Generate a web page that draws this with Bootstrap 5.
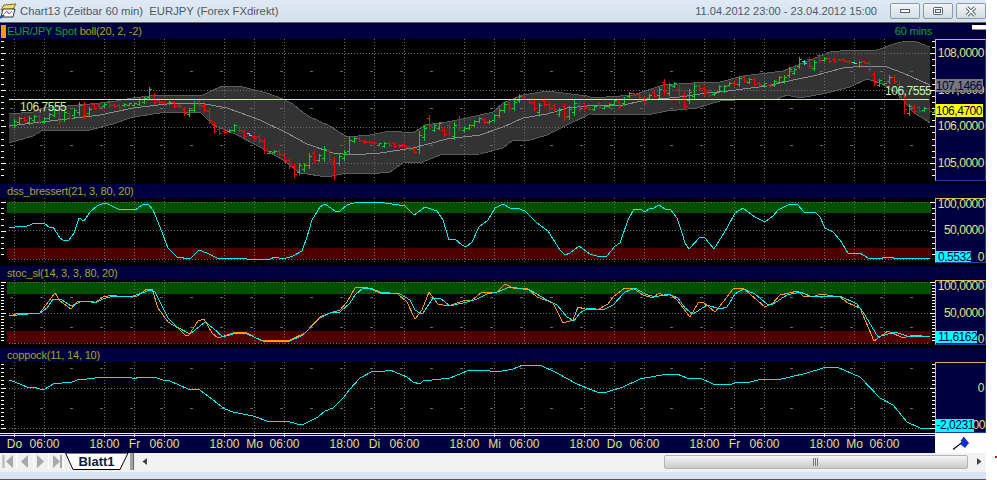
<!DOCTYPE html>
<html lang="de">
<head>
<meta charset="UTF-8">
<title>Chart13</title>
<link href="https://cdn.jsdelivr.net/npm/bootstrap@5.3.3/dist/css/bootstrap.min.css" rel="stylesheet">
<style>
  body { margin: 0; background: #fff; font-family: "Liberation Sans", Arial, sans-serif; overflow: hidden; }
  svg { display: block; }
  svg text { font-family: "Liberation Sans", Arial, sans-serif; }

  .chart-window { width: 986px; height: 480px; background: #000; }

  .title-bar { height: 23px; background: linear-gradient(#dfe9f3, #d3e1ee); border-bottom: 1px solid #666; color: #4d5966; font-size: 11.3px; }
  .title-text { margin-left: 3px; white-space: pre; }
  .title-range { margin-right: 10px; font-size: 11.1px; }
  .win-btn { width: 30px; height: 16px; margin-left: 3px; padding: 0; border: 1px solid #8b99a8; border-radius: 2px; background: linear-gradient(#f0f4f8, #d4dde6); }

  .gap-line { height: 1px; }
  .pane-head { background: #000040; height: 14px; padding-left: 7px; font-size: 11px; letter-spacing: -.18px; line-height: 14px; color: #a8a818; white-space: pre; }
  .pane-head.first { height: 15px; padding-left: 1px; line-height: 15px; }
  .sym-mark { width: 5px; height: 13px; background: #ff9900; margin-right: 1px; }
  .sym-name { color: #00a828; }
  .period { color: #00a828; margin-left: auto; margin-right: 40px; }
  .mini-btn { width: 14px; height: 5px; background: #fff; border-bottom: 1px solid #888; margin-bottom: 8px; }

  .axis-box { width: 51px; border-style: solid; border-width: 1px; border-color: #e3b84a #1740a8 #1740a8 #e3b84a; background: #000040; }
  .axis-box svg { overflow: visible; }
  .axis-p1 { height: 142px; }
  .axis-p2 { height: 65px; }
  .axis-p3 { height: 65px; }
  .axis-p4 { height: 71px; }
  .axis-box text { font-size: 12px; letter-spacing: -.47px; fill: #e0e47c; }
  .axis-box .on-box { fill: #000040; }
  .plot-value { font-size: 12px; letter-spacing: -.47px; fill: #c4f5a8; }

  .plot { width: 935px; flex: none; }
  .time-axis { height: 20px; background: #000040; }
  .flag-cell { width: 51px; background: #fff; }
  .time-axis text { font-size: 12px; fill: #e0e47c; text-anchor: middle; }

  .sheet-bar { height: 19px; background: #f0f0f0; }
  .sheet-grip { width: 4px; height: 17px; background: #a0a0a0; border-right: 1px solid #666; margin-left: 1px; }
  .sheet-scroll { background: #f2f2f2; height: 17px; margin-left: 3px; }
  .scroll-thumb { width: 304px; height: 14px; margin-left: auto; border: 1px solid #b4b4b4; border-radius: 2px; background: linear-gradient(#f6f6f6, #cacaca); }
  .status-strip { height: 7px; background: #dae5f1; border-bottom: 1px solid #555; box-sizing: content-box; }
  .stray-dot { width: 2px; height: 2px; background: #e00; left: 995px; top: 456px; }
</style>
</head>
<body>
<div class="chart-window d-flex flex-column">

  <div class="title-bar d-flex align-items-center">
    <svg width="17" height="16" viewBox="0 0 17 16">
      <path d="M4 2 L16 1 L13 6 L1 7 Z" fill="#f6de6a" stroke="#7a6a20"/>
      <path d="M3 6 H15 L13 14 H1 Z" fill="#fff" stroke="#333"/>
      <path d="M4 11 L7 8 L9 11 L12 8" fill="none" stroke="#d0405a"/>
      <path d="M0 15 L4 12" stroke="#1c4f9c" stroke-width="2"/>
    </svg>
    <span class="title-text">Chart13 (Zeitbar 60 min)  EURJPY (Forex FXdirekt)</span>
    <span class="title-range ms-auto">11.04.2012 23:00 - 23.04.2012 15:00</span>
    <button class="win-btn d-flex align-items-center justify-content-center" aria-label="Minimieren">
      <svg width="12" height="6" viewBox="0 0 12 6"><rect x="1.5" y="1.5" width="9" height="3" fill="#fff" stroke="#55606c"/></svg>
    </button>
    <button class="win-btn d-flex align-items-center justify-content-center" aria-label="Wiederherstellen">
      <svg width="12" height="10" viewBox="0 0 12 10"><rect x="1.5" y="1.5" width="9" height="7" rx="1" fill="#fff" stroke="#55606c"/><rect x="3.5" y="3.5" width="5" height="3" fill="#e8edf2" stroke="#55606c"/></svg>
    </button>
    <button class="win-btn d-flex align-items-center justify-content-center" aria-label="Schließen">
      <svg width="14" height="11" viewBox="0 0 14 11"><path d="M3 1.5 L11 9.5 M11 1.5 L3 9.5" stroke="#55606c" stroke-width="3.4"/><path d="M3 1.5 L11 9.5 M11 1.5 L3 9.5" stroke="#fff" stroke-width="1.6"/></svg>
    </button>
  </div>
  <div class="gap-line"></div>

  <!-- price pane -->
  <div class="pane-head first d-flex align-items-center">
    <span class="sym-mark"></span><span class="sym-name">EUR/JPY Spot</span><span> boll(20, 2, -2)</span>
    <span class="period">60 mins</span><span class="mini-btn"></span>
  </div>
  <div class="d-flex">
    <svg class="plot" id="plotPrice" width="935" height="145" viewBox="0 39 935 145"></svg>
    <div class="axis-box axis-p1">
      <svg width="49" height="140" viewBox="936 40 49 140">
        <g text-anchor="end">
          <text x="984" y="57">108,0000</text>
          <text x="984" y="94">107,0000</text>
          <text x="984" y="130">106,0000</text>
          <text x="984" y="167">105,0000</text>
        </g>
        <rect x="936" y="79" width="47" height="13" fill="#777"/>
        <text class="on-box" x="982" y="90" text-anchor="end">107,1466</text>
        <rect x="936" y="104" width="47" height="13" fill="#ff0"/>
        <text class="on-box" x="982" y="115" text-anchor="end">106,4700</text>
      </svg>
    </div>
  </div>

  <!-- dss -->
  <div class="pane-head">dss_bressert(21, 3, 80, 20)</div>
  <div class="d-flex">
    <svg class="plot" id="plotDss" width="935" height="68" viewBox="0 198 935 68"></svg>
    <div class="axis-box axis-p2">
      <svg width="49" height="63" viewBox="936 199 49 63">
        <g text-anchor="end">
          <text x="984" y="208">100,0000</text>
          <text x="984" y="234">50,0000</text>
          <text x="984" y="261">0</text>
        </g>
        <rect x="936" y="251" width="35" height="11" fill="#0ff"/>
        <text class="on-box" x="938" y="261">0,5532</text>
      </svg>
    </div>
  </div>

  <!-- stochastic -->
  <div class="pane-head">stoc_sl(14, 3, 3, 80, 20)</div>
  <div class="d-flex">
    <svg class="plot" id="plotStoc" width="935" height="68" viewBox="0 280 935 68"></svg>
    <div class="axis-box axis-p3">
      <svg width="49" height="63" viewBox="936 281 49 63">
        <g text-anchor="end">
          <text x="984" y="290">100,0000</text>
          <text x="984" y="317">50,0000</text>
          <text x="984" y="343">0</text>
        </g>
        <rect x="936" y="331" width="41" height="12" fill="#0ff"/>
        <text class="on-box" x="938" y="341">11,6162</text>
      </svg>
    </div>
  </div>

  <!-- coppock -->
  <div class="pane-head">coppock(11, 14, 10)</div>
  <div class="d-flex">
    <svg class="plot" id="plotCopp" width="935" height="71" viewBox="0 362 935 71"></svg>
    <div class="axis-box axis-p4">
      <svg width="49" height="69" viewBox="936 363 49 69">
        <g text-anchor="end">
          <text x="984" y="392">0</text>
          <text x="985" y="429">00</text>
        </g>
        <rect x="936" y="419" width="38" height="13" fill="#0ff"/>
        <text class="on-box" x="936.5" y="429">-2,0231</text>
      </svg>
    </div>
  </div>

  <!-- time axis -->
  <div class="time-axis d-flex">
    <svg class="plot" id="timeAxis" width="935" height="20" viewBox="0 433 935 20"></svg>
    <div class="flag-cell d-flex align-items-center justify-content-center">
      <svg width="51" height="20" viewBox="935 433 51 20">
        <path d="M953 449.5 L964 441" stroke="#000" stroke-width="1.2"/>
        <path d="M964 437 L969 443 L965 448 L960 444 Z" fill="#1030d0"/>
        <path d="M961 441 L964 437" stroke="#000"/>
      </svg>
    </div>
  </div>

  <!-- sheet tabs and scrollbar -->
  <div class="sheet-bar d-flex align-items-start">
    <svg width="65" height="19" viewBox="0 0 65 19">
      <rect width="65" height="19" fill="#f0f0f0"/>
      <path d="M16.5 1 V16 M33.5 1 V16 M48.5 1 V16 M63.5 1 V16" stroke="#fff"/>
      <path d="M3 2 V15 M4 2 V15" stroke="#a8a8a8"/>
      <path d="M13 2 L6 8.5 L13 15 Z M28 2 L21 8.5 L28 15 Z M37 2 L44 8.5 L37 15 Z M53 2 L60 8.5 L53 15 Z" fill="#a8a8a8"/>
      <path d="M61 2 V15" stroke="#a8a8a8" stroke-width="2"/>
    </svg>
    <svg width="64" height="19" viewBox="0 0 64 19">
      <path d="M0.5 0 L8 16.5 H55 L63 0 Z" fill="#fff" stroke="#000"/>
      <text x="31.5" y="13" text-anchor="middle" font-size="13" font-weight="700" fill="#0a1a40">Blatt1</text>
    </svg>
    <span class="sheet-grip"></span>
    <div class="sheet-scroll flex-grow-1 d-flex align-items-center">
      <svg class="ms-1" width="8" height="9" viewBox="0 0 8 9"><path d="M6 1 L1.5 4.5 L6 8 Z" fill="#444"/></svg>
      <div class="scroll-thumb d-flex align-items-center justify-content-center">
        <svg width="8" height="8" viewBox="0 0 8 8"><path d="M1.5 0 V8 M3.5 0 V8 M5.5 0 V8" stroke="#777"/></svg>
      </div>
      <svg class="ms-2 me-1" width="6" height="9" viewBox="0 0 6 9"><path d="M1 1 L5.5 4.5 L1 8 Z" fill="#444"/></svg>
    </div>
  </div>
  <div class="status-strip"></div>
</div>
<span class="stray-dot position-absolute"></span>

<script src="https://cdn.jsdelivr.net/npm/bootstrap@5.3.3/dist/js/bootstrap.bundle.min.js"></script>
<script>
  const NS = 'http://www.w3.org/2000/svg';
  const GRID_X = [];
  for (let i = 0; i < 31; i++) {
    if (i % 4 !== 2) GRID_X.push(14 + 30 * i);
  }

  function add(svg, tag, attrs) {
    const el = document.createElementNS(NS, tag);
    for (const k in attrs) el.setAttribute(k, attrs[k]);
    svg.appendChild(el);
    return el;
  }
  function line(svg, x1, y1, x2, y2, color, dash) {
    const attrs = { x1: x1, y1: y1, x2: x2, y2: y2, stroke: color, 'shape-rendering': 'crispEdges' };
    if (dash) attrs['stroke-dasharray'] = dash;
    add(svg, 'line', attrs);
  }
  function poly(svg, pts, color) {
    add(svg, 'polyline', { points: pts, fill: 'none', stroke: color, 'stroke-width': 1, 'shape-rendering': 'crispEdges' });
  }

  // grid of a pane: dotted rows, short dashes every 30px, dotted columns
  function grid(svg, top, bottom, dotted, dashed) {
    dotted.forEach(y => line(svg, 9, y + .5, 930, y + .5, '#6e6e6e', '1 2'));
    dashed.forEach(y => line(svg, 10, y + .5, 930, y + .5, '#666', '3 27'));
    GRID_X.forEach(x => line(svg, x + .5, top, x + .5, bottom, '#6e6e6e', '1 2'));
  }
  // little white scale marks on both sides of a pane
  function scale(svg, from, to, step, major) {
    for (let y = from; y <= to; y += step) {
      const yy = Math.round(y) + .5;
      const long = major.some(m => Math.abs(m - y) < step / 2);
      line(svg, 1, yy, long ? 6 : 4, yy, '#fff');
      line(svg, long ? 930 : 932, yy, 935, yy, '#fff');
    }
  }
  function bands(svg, green, red) {
    add(svg, 'rect', { x: 7, y: green[0], width: 924, height: green[1] - green[0], fill: '#005000' });
    add(svg, 'rect', { x: 7, y: red[0], width: 924, height: red[1] - red[0], fill: '#500000' });
  }

  // ---- price pane ----
  const price = document.getElementById('plotPrice');
  const upper = '9,114 33,112 43,108 67,106 90,104 110,102 133,98 157,95 203,95 213,90 223,86 243,87 267,93 283,99 293,104 300,110 310,117 330,126 347,137 370,135 380,133 390,131 413,133 425,125 447,122 467,118 493,112 503,103 523,95 547,91 587,96 593,98 633,95 663,85 693,83 720,82 743,76 783,71 793,67 830,52 850,50 877,50 897,43 907,41 917,42 930,47';
  const lower = '9,143 33,136 43,130 90,130 113,124 133,117 167,112 200,112 213,125 233,133 260,147 283,160 300,173 327,177 347,173 377,174 380,173 390,172 403,163 423,162 440,155 480,154 503,148 513,140 527,141 547,135 567,125 590,114 647,115 667,111 697,108 720,101 750,99 777,99 787,95 800,98 827,93 850,87 867,79 880,83 897,93 913,112 930,123';
  const middle = '9,126 33,123 67,119 100,115 133,108 167,104 200,103 227,108 260,120 287,133 307,144 333,153 353,155 380,153 413,148 447,139 480,135 503,127 523,118 547,114 567,108 597,105 623,105 647,100 680,97 707,93 720,92 767,86 793,80 813,76 843,68 863,66 887,67 903,73 930,85';

  add(price, 'polygon', { points: upper + ' ' + lower.split(' ').reverse().join(' '), fill: '#333' });
  grid(price, 39, 181, [53, 90, 127, 163], [71, 108, 145]);
  poly(price, upper, '#5c5c5c');
  poly(price, lower, '#5c5c5c');
  poly(price, middle, '#8c8c8c');
  scale(price, 41, 180, 6.1, [53, 90, 127, 163]);

  // OHLC bars, one every 5px from x=14: colour, high, low (y*3, as read off the picture)
  const barsA = 'g358,382 g350,368 r352,362 g348,372 g345,362 r345,365 g352,370 g340,358 g328,348 r330,372 g330,362 r335,358 g325,350 g305,345 r305,355 g320,345 r310,328 r310,325 g308,322 r298,320 r312,320 r312,325 g308,318 g308,315 g310,316 g295,315 g290,310 g262,298 r280,312 r298,310 r303,312 g302,312 r303,320 r312,322 r320,345 g325,348 g302,335 r300,318 r312,335 r325,368 r365,400 r385,402 r390,400 g388,396 g372,392 r378,392 r390,412 c400,405 r405,418 r402,425 r415,460 g452,460 g450,458 r450,465 r462,482 r475,505 r490,530 g490,522 g490,512 g458,505 r452,485 g462,482 g438,482 r448,482 r470,536 g462,495 g450,480 g412,462 g412,425 r412,422 r420,428 r420,430 r422,432 g430,436';
  const barsB = 'g305,320 r305,318 r307,320 r312,320 r310,322 r318,330 r325,340 g272,338 g255,300 r225,268 g252,272 g245,268 r265,288 r250,285 g245,298 r228,270 g260,272 g253,268 g240,258 g232,246 r235,250 g240,250 g222,244 g205,230 g185,215 r185,210 g180,210 g163,187 r170,178 r175,188 r180,210 g188,222 r175,197 r185,210 r190,214 g205,228 r188,240 g198,238 g180,225 r183,212 r185,208 r200,208 g195,210 r185,205 g198,204 g188,200 g178,195 r180,203 g172,195 g156,172 r160,166 r160,175 r172,192 g162,178 r152,172 g140,172 r117,162 g128,165 g125,140 r135,190 r155,208 g148,188 g128,178 r132,148 r138,165 r148,168 g155,165 g135,155';
  const barsC = 'g255,275 g245,258 r245,255 g228,258 r228,245 g235,250 r235,255 r245,255 g250,255 r252,260 g240,258 g228,250 g226,250 g202,232 g205,222 g172,205 c180,192 r170,205 g180,210 r160,185 g172,182 r172,185 r175,185 r178,180 r178,182 r180,190 c186,190 g182,200 r182,188 r183,213 r212,255 g238,258 g248,252 g225,250 r225,250 r240,295 r285,340 g312,345 r315,338 r318,335 g322,332 r322,335 g330,336';
  const barColor = { g: '#08cc30', r: '#ff0000', c: '#00ffff' };
  let barX = 14;
  function drawBars(str, offset) {
    str.split(' ').forEach(b => {
      const kind = b[0];
      const parts = b.slice(1).split(',');
      const hi = Math.round((+parts[0] + offset) / 3);
      const lo = Math.round((+parts[1] + offset) / 3);
      const col = barColor[kind];
      const x = barX + .5;
      line(price, x, hi, x, lo + 1, col);
      const openY = Math.round(kind === 'g' ? lo - (lo - hi) * .2 : hi + (lo - hi) * .2) + .5;
      const closeY = Math.round(kind === 'g' ? hi + (lo - hi) * .2 : lo - (lo - hi) * .2) + .5;
      line(price, x - 2.5, openY, x, openY, col);
      line(price, x, closeY, x + 2.5, closeY, col);
      barX += 5;
    });
  }
  drawBars(barsA, 0);
  drawBars(barsB, 120);
  drawBars(barsC, 0);

  line(price, 9, 99.5, 929, 99.5, '#c4f5a8');
  [[20, 111], [885, 95]].forEach(p => {
    const t = add(price, 'text', { x: p[0], y: p[1], class: 'plot-value' });
    t.textContent = '106,7555';
  });

  // ---- dss pane ----
  const dss = document.getElementById('plotDss');
  bands(dss, [202, 213], [248, 259]);
  grid(dss, 198, 263, [202, 230, 259], []);
  scale(dss, 201.7, 260, 5.83, [201.7, 230.9, 260]);
  poly(dss, '9,227 13,228 17,226 27,226 35,223 44,223 50,228 53,227 60,238 63,240 69,240 74,233 79,218 84,221 90,212 97,206 104,203 108,204 120,210 127,209 135,210 142,205 148,204 153,210 160,227 168,248 177,257 190,259 199,250 207,253 217,258 233,259 240,258 247,259 270,259 275,257 283,259 293,256 302,251 307,237 312,220 320,207 325,204 335,211 340,211 347,205 357,202 377,202 392,204 405,206 414,215 425,207 437,211 443,220 449,240 455,239 462,245 466,247 472,242 479,227 488,220 495,208 503,204 510,208 517,208 525,211 537,223 548,231 560,250 565,255 570,253 579,246 590,254 600,257 607,256 615,246 620,243 628,220 634,209 640,209 645,212 650,208 654,208 659,205 665,209 670,209 677,218 682,233 685,243 689,249 700,237 705,238 714,249 727,228 735,213 743,208 755,217 765,222 773,216 778,210 790,204 797,204 804,212 815,212 820,217 825,228 833,232 840,240 848,253 860,253 868,258 880,259 885,257 890,257 897,259 903,258 930,259', '#00f0f8');

  // ---- stochastic pane ----
  const stoc = document.getElementById('plotStoc');
  bands(stoc, [282, 294], [331, 343]);
  grid(stoc, 280, 345, [282, 313, 343], [297, 327]);
  scale(stoc, 282, 343, 3.05, [282, 312.5, 343]);
  poly(stoc, '9,316 20,313 40,313 55,293 60,301 71,309 78,301 85,302 92,301 95,303 103,297 113,295 120,297 137,296 147,289 152,289 158,308 168,322 178,328 185,335 189,335 198,321 204,319 212,333 218,338 233,333 245,332 260,340 290,340 305,333 320,317 330,313 340,310 347,302 355,288 365,287 373,290 380,293 398,294 407,302 415,319 422,310 429,292 438,304 448,306 463,301 472,300 482,292 497,292 505,284 513,288 528,289 537,297 553,303 563,323 573,320 578,307 585,309 597,310 608,304 613,297 625,288 633,288 643,295 653,298 659,293 665,296 670,294 678,301 690,317 698,303 703,302 715,312 727,297 733,289 743,288 765,307 773,303 780,295 798,291 803,296 813,297 820,294 840,297 848,303 860,308 874,341 888,331 903,338 913,335 930,337', '#ff9a10');
  poly(stoc, '9,316 17,315 40,313 47,308 53,299 62,300 71,306 80,302 88,301 95,303 103,299 113,296 133,296 142,293 150,290 155,292 160,302 168,318 177,327 190,334 205,322 213,328 223,337 233,334 245,333 263,341 290,341 303,335 320,318 330,313 340,312 350,303 355,295 363,288 373,289 380,292 400,294 410,300 415,310 420,313 423,313 433,298 440,298 450,306 467,302 477,299 487,294 497,292 510,287 530,290 547,300 557,305 567,317 574,321 580,313 588,308 603,310 613,305 625,292 635,288 645,294 655,297 668,294 678,298 685,308 693,314 707,305 720,309 727,307 735,294 743,289 755,294 767,304 773,304 787,295 800,292 810,296 840,296 857,304 863,312 878,337 895,332 907,336 930,336', '#00f0f8');

  // ---- coppock pane ----
  const copp = document.getElementById('plotCopp');
  grid(copp, 362, 432, [388, 428], [368, 408]);
  scale(copp, 364, 428, 4, [388, 428]);
  poly(copp, '9,380 15,382 27,387 33,387 40,389 45,389 53,384 72,382 80,379 87,379 103,377 132,378 135,379 138,377 157,378 163,380 170,381 188,389 200,390 213,400 225,409 233,412 253,416 267,421 287,421 297,424 304,424 318,417 325,411 333,408 343,398 350,389 360,378 373,371 380,372 390,370 407,377 413,382 420,384 423,381 450,378 467,371 482,370 497,372 513,369 523,365 540,365 557,373 577,384 597,392 607,392 623,387 640,379 667,374 677,374 687,378 700,378 713,384 732,384 737,382 750,382 762,379 777,380 790,377 807,373 823,368 837,367 860,377 880,398 893,405 907,422 920,428 930,429', '#00f0f8');

  // ---- time axis ----
  const time = document.getElementById('timeAxis');
  line(time, 0, 433.5, 935, 433.5, '#f4f4c8');
  line(time, 0, 435.5, 935, 435.5, '#f0f080');
  const hours = ['06:00', '18:00', 'Fr', '06:00', '18:00', 'Mo', '06:00', '18:00', 'Di', '06:00', '18:00', 'Mi', '06:00', '18:00', 'Do', '06:00', '18:00', 'Fr', '06:00', '18:00', 'Mo', '06:00'];
  add(time, 'text', { x: 14.5, y: 448 }).textContent = 'Do';
  GRID_X.forEach(x => line(time, x + .5, 433, x + .5, 437, '#f0f080'));
  GRID_X.slice(1).forEach((x, i) => {
    if (hours[i]) add(time, 'text', { x: x + .5, y: 448 }).textContent = hours[i];
  });
</script>
</body>
</html>
